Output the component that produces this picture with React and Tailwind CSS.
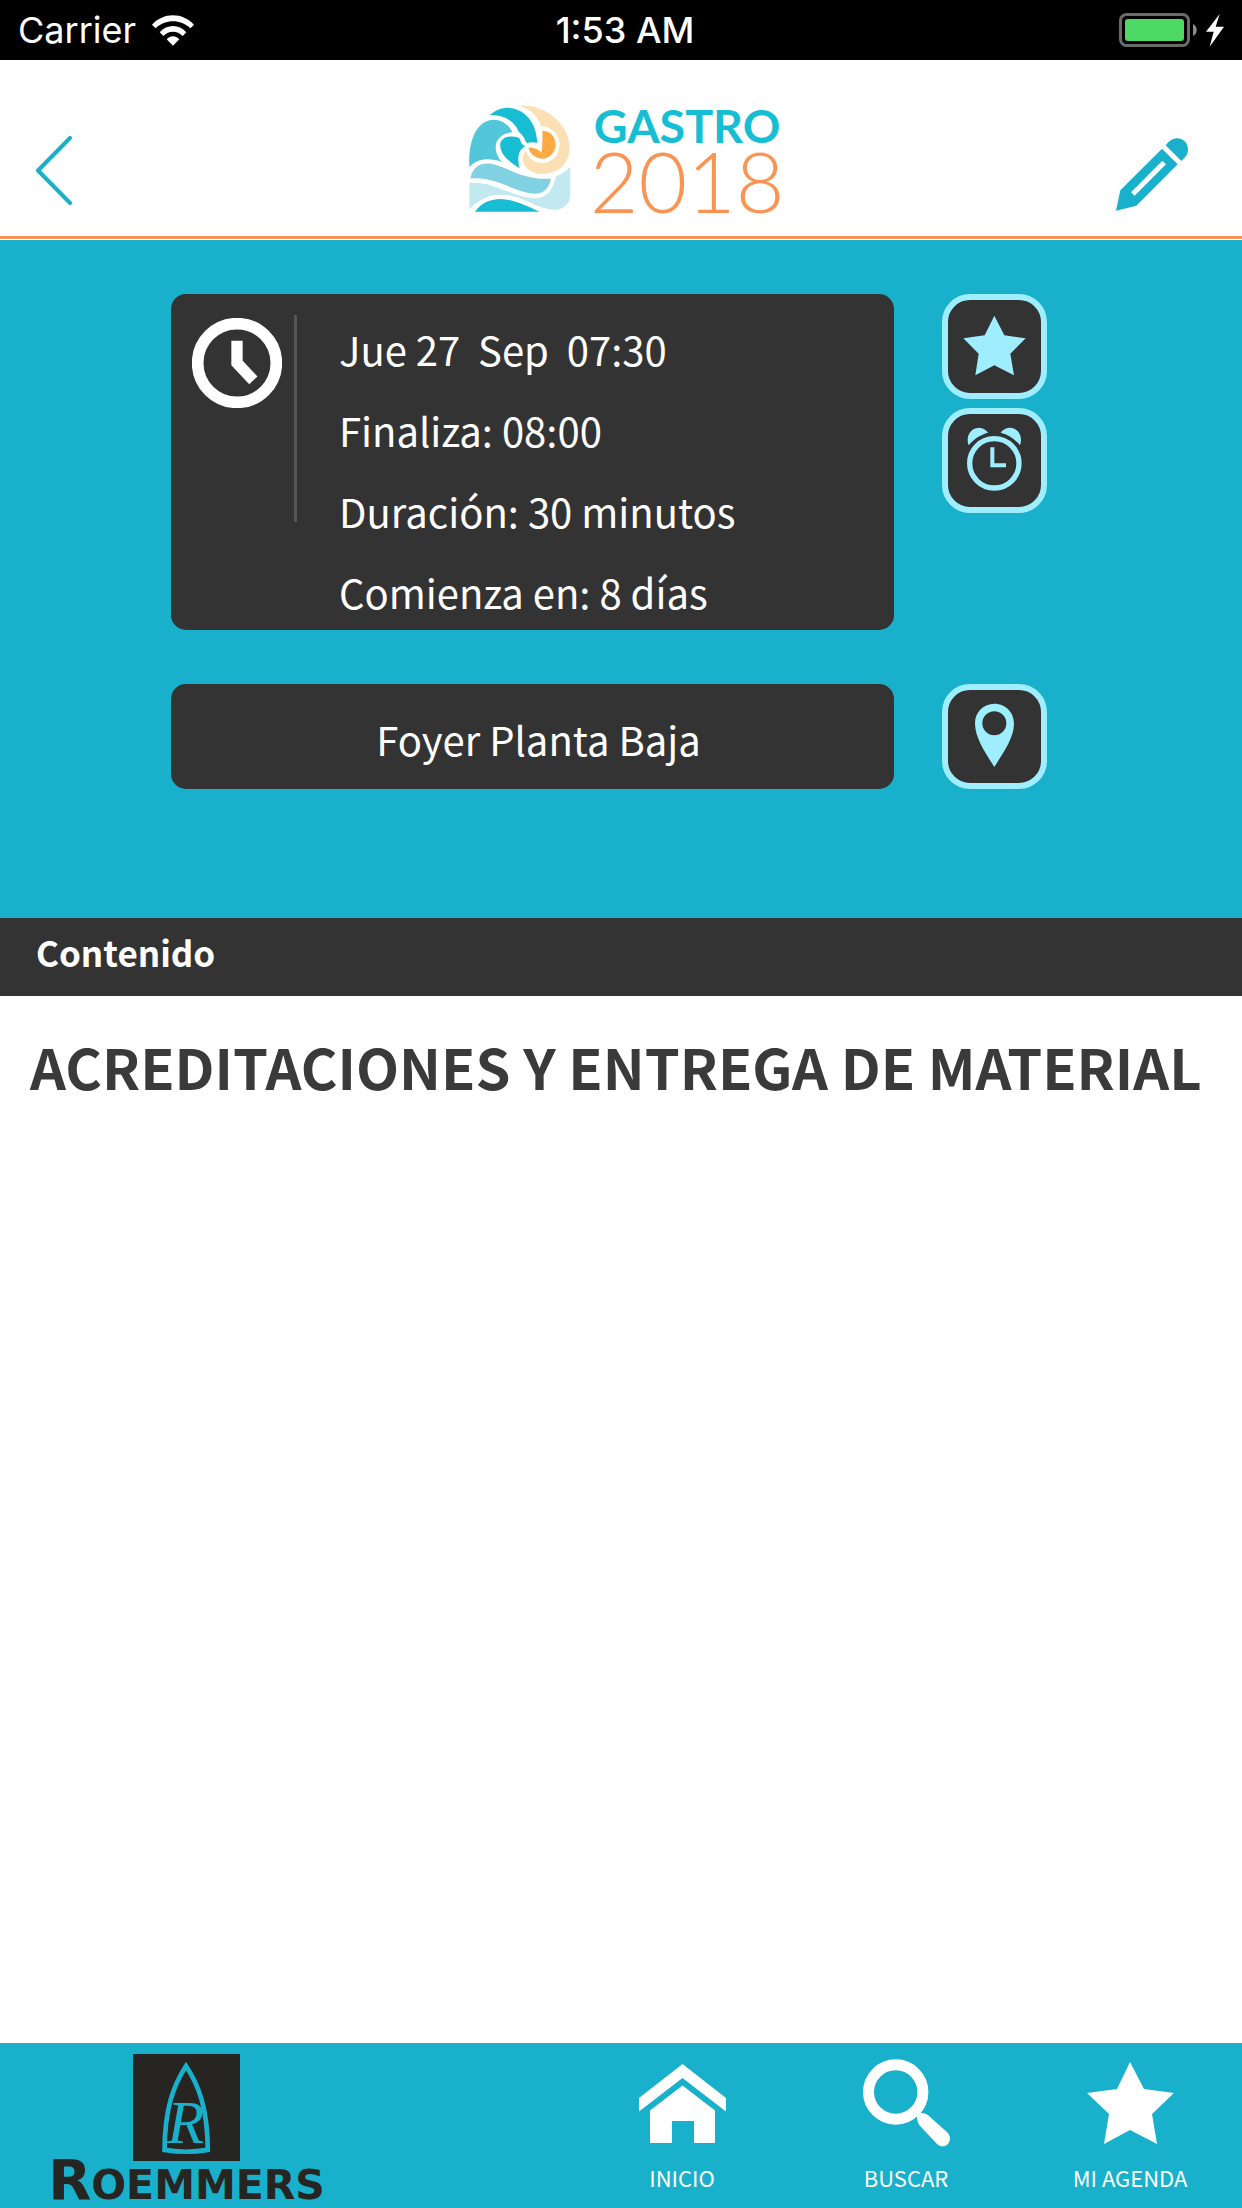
import React, { useState } from "react";

const details = [
  "Jue 27  Sep  07:30",
  "Finaliza: 08:00",
  "Duración: 30 minutos",
  "Comienza en: 8 días",
];

const StatusBar = () => (
  <div className="grid h-[60px] grid-cols-[1fr_auto_1fr] items-center bg-black px-[18px] font-['Inter',sans-serif] text-[36px] leading-[60px] text-white">
    <div className="flex items-center gap-4">
      <span>Carrier</span>
      <svg className="h-[31px] w-[42px]" viewBox="0 0 126 93" fill="#fff">
        <path d="M0 29C34-9 92-9 126 29L115 40C86 12 40 12 11 40Z" />
        <path d="M23 52C45 27 81 27 103 52L92 63C76 46 50 46 34 63Z" />
        <path d="M44 73C55 61 71 61 82 73L63 92Z" />
      </svg>
    </div>
    <span className="pl-2 font-medium">1:53 AM</span>
    <div className="flex items-center justify-end gap-2">
      <svg className="h-[34px] w-[79px]" viewBox="0 0 79 34">
        <rect x="1.5" y="1.5" width="68" height="31" rx="6" fill="none" stroke="#6b6b6b" strokeWidth="3" />
        <rect x="6" y="6" width="59" height="22" rx="3" fill="#4cd964" />
        <path d="M74 11C79 13 79 21 74 23Z" fill="#8a8a8a" />
      </svg>
      <svg className="h-[33px] w-[18px]" viewBox="0 0 54 99" fill="#fff">
        <path d="M41 0L0 53H23L11 98L54 38H29Z" />
      </svg>
    </div>
  </div>
);

const GastroLogo = () => (
  <svg className="h-[113px] w-[316px] overflow-visible" viewBox="80 70 948 339" role="img" aria-label="Gastro 2018">
    <path fill="#52c6db" d="M87 262C83 180 110 121 160 120C192 121 210 142 216 158C188 160 165 177 166 206C168 225 176 238 185 247C150 234 112 234 87 262Z" />
    <path fill="#17bed3" d="M149 106C164 92 182 84 205 84C252 88 288 125 291 190C279 187 269 187 261 191C252 183 255 172 235 156C222 122 190 106 149 106Z" />
    <path fill="#17bed3" d="M180 190C187 170 212 167 235 174C244 180 237 192 255 200C233 210 230 238 238 266C205 246 176 222 180 190Z" />
    <path fill="#fae0b4" d="M238 78C312 74 388 130 388 206C387 251 355 283 305 283C265 281 244 257 247 229C249 222 253 217 258 214C265 240 285 250 305 250C340 248 358 222 358 192C355 160 330 140 302 140C294 112 274 90 238 78Z" />
    <path fill="#fcaa43" d="M306 153C332 154 346 172 346 195C345 220 325 237 305 237C285 235 268 222 264 204C278 201 292 208 304 219C306 199 307 175 306 153Z" />
    <path fill="#80d2e2" d="M90 297C98 255 128 245 165 255C212 268 248 301 332 297C325 331 305 343 280 342C220 337 160 287 90 297Z" />
    <path fill="#c3e9f0" d="M87 310C160 303 215 354 285 356C325 355 338 325 347 290C365 284 380 272 390 261V346C389 372 370 390 345 390C285 390 255 346 180 345C140 345 112 364 87 388Z" />
    <path fill="#17bed3" d="M104 396C120 373 145 358 182 358C225 360 262 381 298 396Z" />
    <text x="460" y="191" fontSize="140" fontWeight="700" fill="#17bed3" className="font-['Lato',sans-serif]">GASTRO</text>
    <text x="448" y="399" fontSize="252" fontWeight="300" fill="#fa9454" className="font-['Lato',sans-serif]">2018</text>
  </svg>
);

const Header = () => (
  <header className="mb-px grid grid-cols-[1fr_auto_1fr] items-end border-b-[3px] border-[#fa9454] bg-white px-9 pt-[43px] pb-5">
    <button type="button" aria-label="Volver" className="justify-self-start pb-[11px]">
      <svg className="h-[69px] w-9" viewBox="0 0 36 69" fill="none" stroke="#18b0ca" strokeWidth="4" strokeLinecap="round" strokeLinejoin="round">
        <path d="M34 2L2 34.500L34 67" />
      </svg>
    </button>
    <div className="pl-2">
      <GastroLogo />
    </div>
    <button type="button" aria-label="Notas" className="justify-self-end pr-[18px] pb-[5px]">
      <svg className="h-[73px] w-[72px]" viewBox="0 0 216 219" fill="#18b0ca">
        <path fillRule="evenodd" d="M0 218L13 157L138 32L185 79L61 203ZM45 163L56 173L150 79L139 68Z" />
        <path d="M149 22C162 7 168 2 184 1C203 2 215 15 216 34C215 50 210 56 196 69Z" />
      </svg>
    </button>
  </header>
);

const IconButton = ({ label, children, ...props }) => (
  <button
    type="button"
    aria-label={label}
    className="size-[105px] shrink-0 rounded-[28px] border-[6px] border-[#9eeeff] bg-[#333333] text-[#9eeeff]"
    {...props}
  >
    <svg className="size-full" viewBox="0 0 279 279" fill="currentColor">
      {children}
    </svg>
  </button>
);

const NavLink = ({ href, label, children }) => (
  <a href={href} className="flex w-56 flex-col items-center gap-4 text-[22px] leading-7 text-white">
    <span className="flex h-[88px] items-center">{children}</span>
    {label}
  </a>
);

// Sponsor on the left, main sections on the right
const Footer = () => (
  <footer className="flex items-start justify-between bg-[#18b0ca]">
    <a href="#roemmers" className="ml-[42px] flex w-[289px] flex-col items-center pt-[11px] text-[#262521]">
      <svg className="size-[107px]" viewBox="340 73 319 319" aria-hidden="true">
        <rect x="340" y="73" width="319" height="319" fill="#262521" />
        <path d="M498 109C537 168 562 236 563 359Q498 370 434 359C435 236 460 168 498 109Z" fill="none" stroke="#18b0ca" strokeWidth="14" />
        <text x="497" y="338" textAnchor="middle" fontSize="180" fontStyle="italic" fill="#18b0ca" className="font-['Liberation_Serif',serif]">R</text>
      </svg>
      <span className="font-['DejaVu_Sans',sans-serif] text-[56px] leading-[37px] font-bold">
        R<span className="text-[41px] leading-5">OEMMERS</span>
      </span>
    </a>
    <nav className="flex pt-4 pb-[17px]">
      <NavLink href="#inicio" label="INICIO">
        <svg className="h-[79px] w-[87px]" viewBox="0 0 87 79" fill="currentColor">
          <path d="M0 34L43.500 0L87 34V47.500L43.500 14L0 47.500Z" />
          <path d="M11 46.500L43.500 21.500L76 46.500V79H55V57H33V79H11Z" />
        </svg>
      </NavLink>
      <NavLink href="#buscar" label="BUSCAR">
        <svg className="h-[88px] w-[87px]" viewBox="0 0 87 88" fill="currentColor">
          <circle cx="32.700" cy="33" r="27.200" fill="none" stroke="currentColor" strokeWidth="11" />
          <path d="M54 57C54 63 56 66 59 69L74 85C82 92 91 82 85 74L66 57C63 54 60 54 57 54Z" />
        </svg>
      </NavLink>
      <NavLink href="#agenda" label="MI AGENDA">
        <svg className="h-[82px] w-[87px]" viewBox="0 0 87 82" fill="currentColor">
          <path d="M43 0L57 27L87 31L65 52L70 82L43 68L17 82L22 52L0 31L30 27Z" />
        </svg>
      </NavLink>
    </nav>
  </footer>
);

const App = () => {
  const [favorite, setFavorite] = useState(false);
  const [alarm, setAlarm] = useState(false);

  return (
    <div className="flex min-h-screen flex-col bg-white font-['Noto_Sans_CJK_SC',sans-serif]">
      <StatusBar />
      <Header />
      <main className="flex-1">
        <section className="flex flex-col gap-[54px] bg-[#18b0ca] pt-[54px] pr-[195px] pb-[129px] pl-[171px] text-[40px] text-white">
          <div className="flex items-start gap-12">
            <div className="flex flex-1 items-start rounded-[15px] bg-[#333333] pl-[21px]">
              <svg className="mt-6 size-[90px]" viewBox="0 0 270 270" fill="none" stroke="#fff">
                <circle cx="135" cy="135" r="118" strokeWidth="35" />
                <path d="M135 68V135L184 187" strokeWidth="34" />
              </svg>
              <div className="mt-[21px] ml-3 h-[207px] w-[3px] bg-[#555555]" />
              <ul className="flex flex-col gap-[21px] pt-[25px] pb-2 pl-[42px] leading-[60px] whitespace-pre">
                {details.map((line) => (
                  <li key={line}>{line}</li>
                ))}
              </ul>
            </div>
            <div className="flex flex-col gap-[9px]">
              <IconButton label="Favorito" aria-pressed={favorite} onClick={() => setFavorite(!favorite)}>
                <path d="M139 47L169 106L233 115L187 161L198 226L139 196L82 226L92 161L46 115L110 106Z" />
              </IconButton>
              <IconButton label="Alarma" aria-pressed={alarm} onClick={() => setAlarm(!alarm)}>
                <circle cx="139" cy="148" r="74" fill="none" stroke="currentColor" strokeWidth="16" />
                <path d="M133 100V154H174" fill="none" stroke="currentColor" strokeWidth="12" />
                <path d="M62 94C52 66 68 42 93 41C106 42 116 48 120 56C98 62 78 74 62 94Z" />
                <path d="M216 94C226 66 210 42 185 41C172 42 162 48 158 56C180 62 200 74 216 94Z" />
              </IconButton>
            </div>
          </div>
          <div className="flex items-center gap-12">
            <div className="flex-1 rounded-[15px] bg-[#333333] pt-[25px] pb-5 pl-3 text-center leading-[60px]">
              Foyer Planta Baja
            </div>
            <IconButton label="Ver en el mapa">
              <path fillRule="evenodd" d="M139 41C171 41 198 66 198 100C198 145 165 190 139 231C113 190 81 145 81 100C81 66 107 41 139 41ZM139 64A36 36 0 1 0 139 136A36 36 0 1 0 139 64Z" />
            </IconButton>
          </div>
        </section>
        <h2 className="bg-[#333333] pt-2 pb-[18px] pl-9 text-[35px] leading-[52px] font-bold text-white">
          Contenido
        </h2>
        <h1 className="px-[30px] pt-[34px] text-[56px] leading-[72px] font-bold text-[#3a3a3a]">
          ACREDITACIONES Y ENTREGA DE MATERIAL
        </h1>
      </main>
      <Footer />
    </div>
  );
};

export default App;
